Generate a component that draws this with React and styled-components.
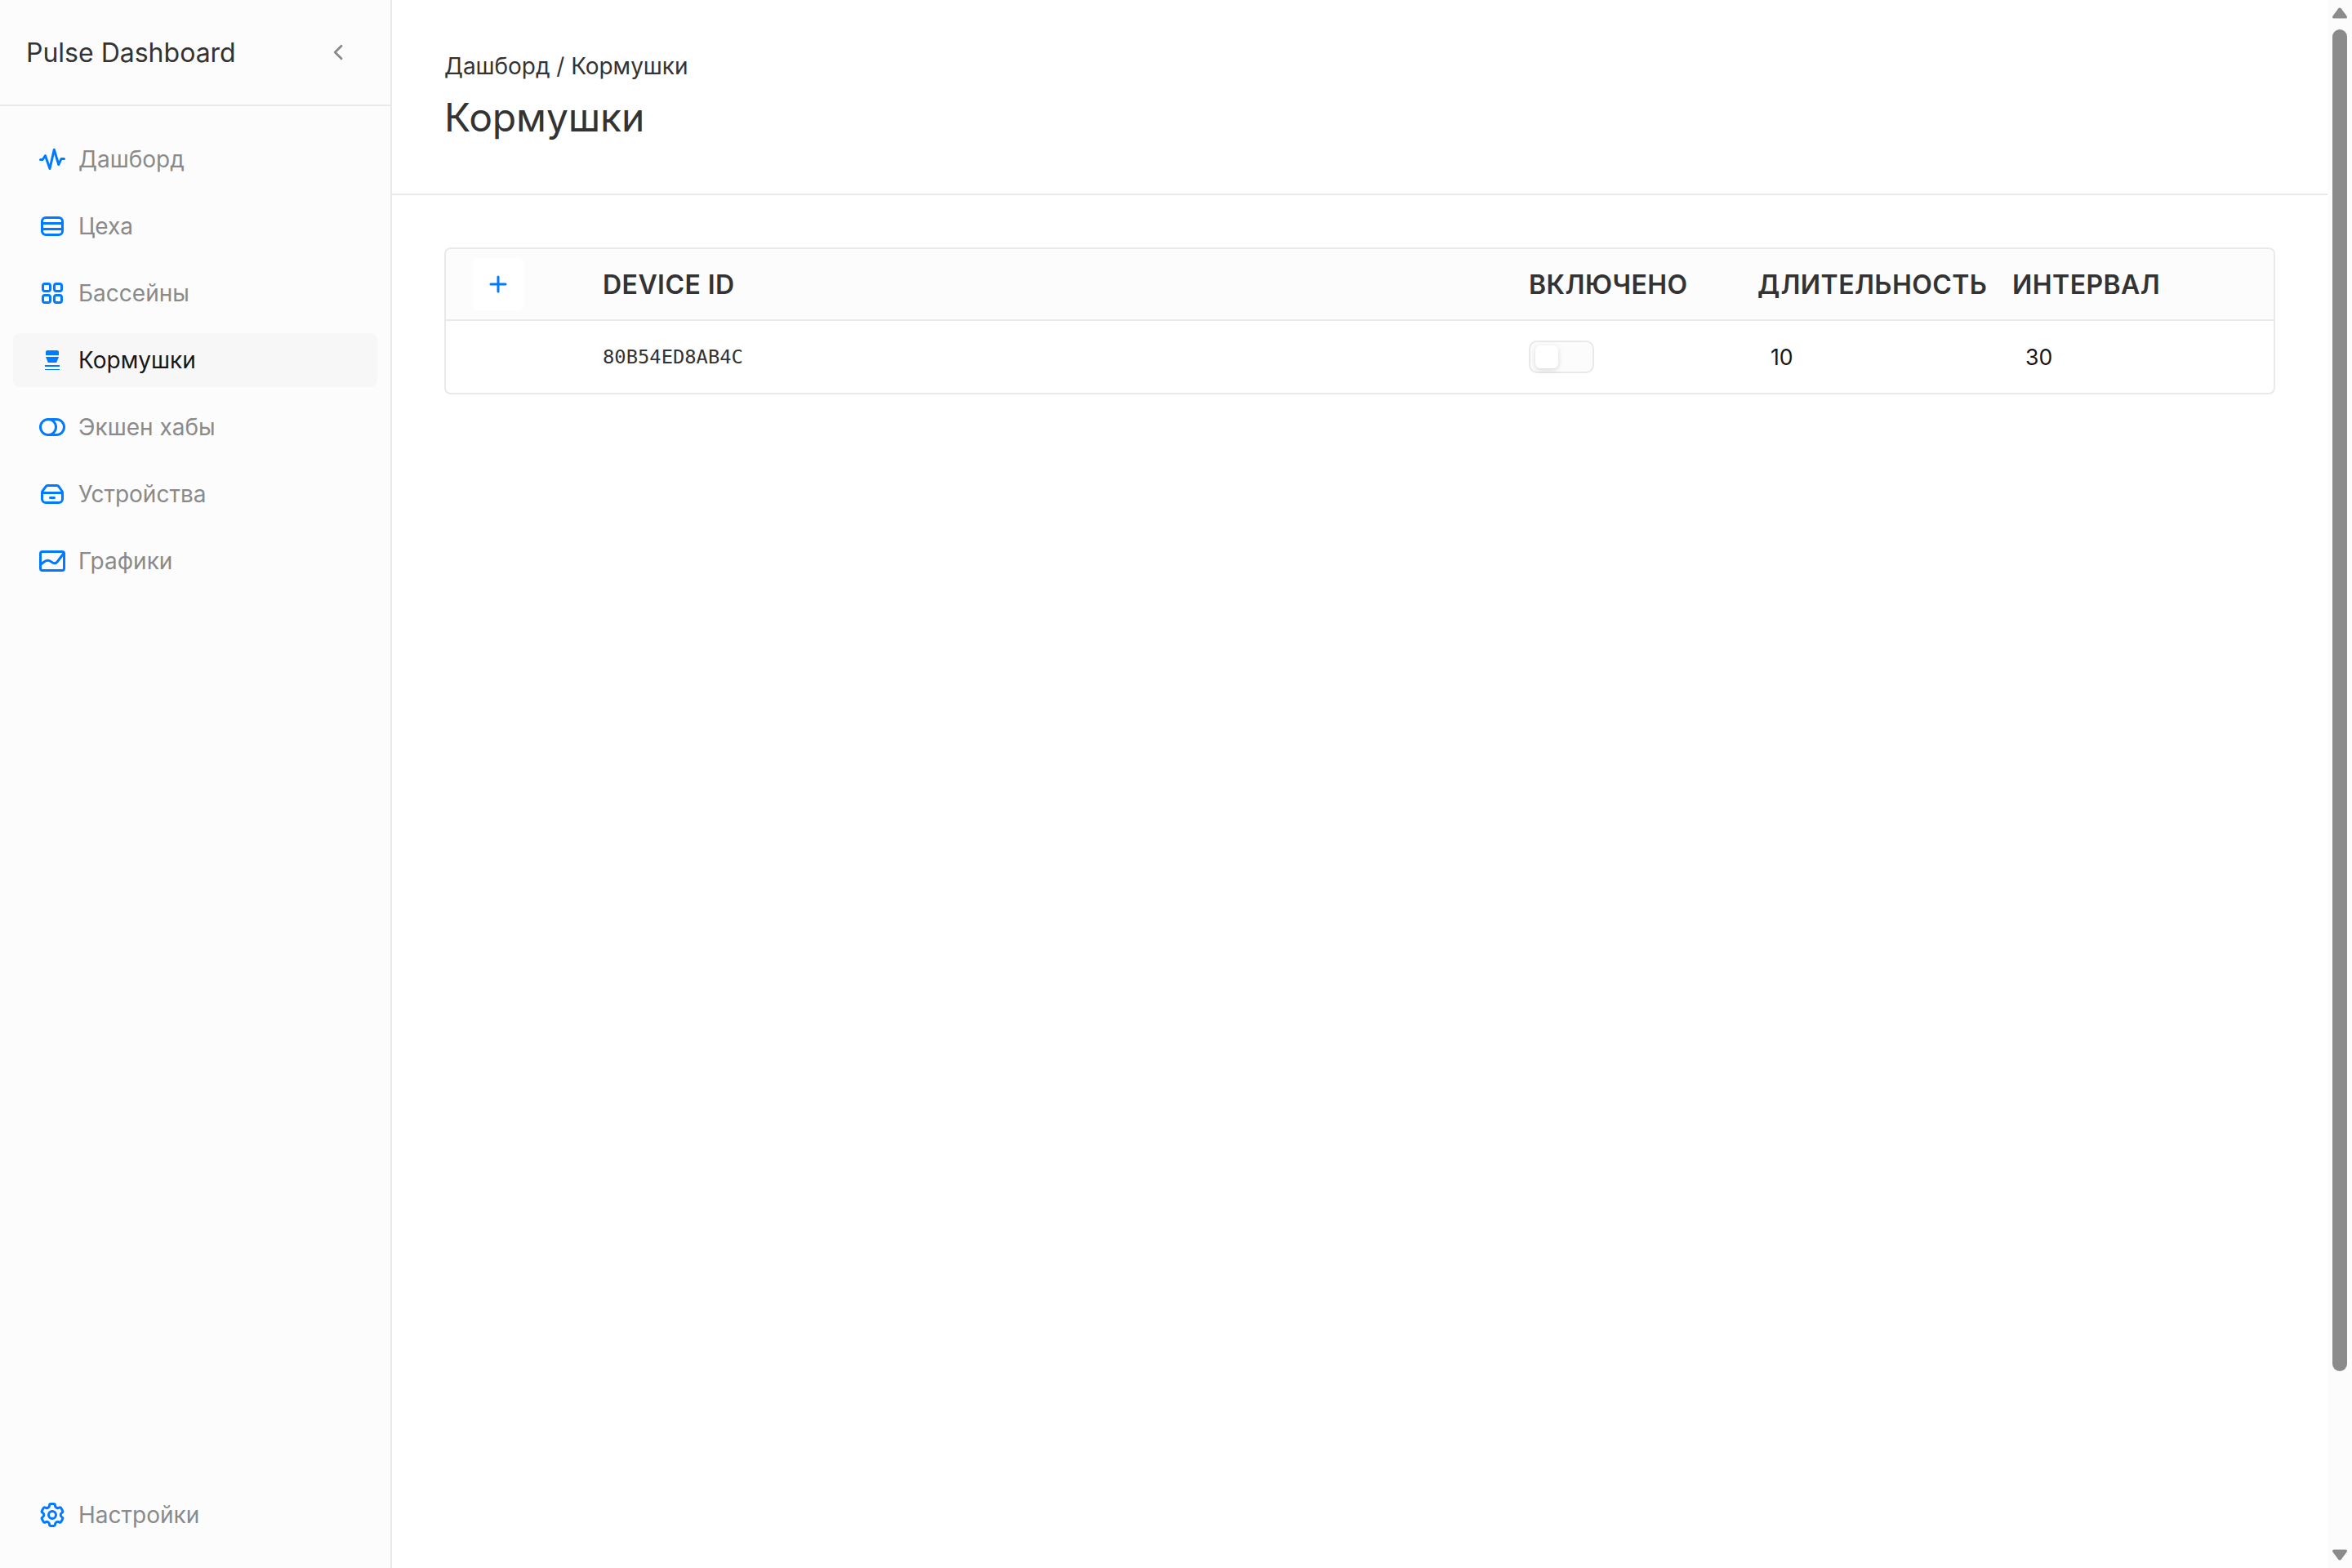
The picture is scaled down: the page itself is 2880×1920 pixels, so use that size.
import styled, { createGlobalStyle, css } from 'styled-components';
import { useState } from 'react';

const NAV_ITEMS = [
  { id: 'dashboard', label: 'Дашборд', Icon: PulseIcon },
  { id: 'workshops', label: 'Цеха', Icon: RowsIcon },
  { id: 'pools', label: 'Бассейны', Icon: GridIcon },
  { id: 'feeders', label: 'Кормушки', Icon: FeederIcon },
  { id: 'hubs', label: 'Экшен хабы', Icon: HubIcon },
  { id: 'devices', label: 'Устройства', Icon: DriveIcon },
  { id: 'charts', label: 'Графики', Icon: ChartIcon },
];

const FEEDERS = [
  { deviceId: '80B54ED8AB4C', enabled: false, duration: 10, interval: 30 },
];

export default function App() {
  const [active, setActive] = useState('feeders');
  const [feeders, setFeeders] = useState(FEEDERS);

  const toggle = (deviceId) =>
    setFeeders((prev) =>
      prev.map((f) =>
        f.deviceId === deviceId ? { ...f, enabled: !f.enabled } : f
      )
    );

  return (
    <>
      <GlobalStyle />
      <Layout>
        <Sidebar>
          <SidebarHeader>
            <Brand>Pulse Dashboard</Brand>
            <CollapseButton>
              <ChevronIcon />
            </CollapseButton>
          </SidebarHeader>
          <Nav>
            {NAV_ITEMS.map(({ id, label, Icon }) => (
              <NavItem
                key={id}
                $active={id === active}
                onClick={() => setActive(id)}
              >
                <Icon />
                {label}
              </NavItem>
            ))}
          </Nav>
          <NavFooter>
            <NavItem>
              <GearIcon />
              Настройки
            </NavItem>
          </NavFooter>
        </Sidebar>
        <Main>
          <PageHeader>
            <Breadcrumbs>Дашборд / Кормушки</Breadcrumbs>
            <Title>Кормушки</Title>
          </PageHeader>
          <Content>
            <Table>
              <HeadRow>
                <AddButton>
                  <PlusIcon />
                </AddButton>
                <HeadCell>DEVICE ID</HeadCell>
                <HeadCell>ВКЛЮЧЕНО</HeadCell>
                <HeadCell>ДЛИТЕЛЬНОСТЬ</HeadCell>
                <HeadCell>ИНТЕРВАЛ</HeadCell>
              </HeadRow>
              {feeders.map((f) => (
                <Row key={f.deviceId}>
                  <span />
                  <DeviceId>{f.deviceId}</DeviceId>
                  <Switch onClick={() => toggle(f.deviceId)}>
                    <Knob $on={f.enabled} />
                  </Switch>
                  <NumberCell>{f.duration}</NumberCell>
                  <NumberCell>{f.interval}</NumberCell>
                </Row>
              ))}
            </Table>
          </Content>
        </Main>
        <Scrollbar>
          <ArrowIcon />
          <Thumb />
          <ArrowIcon $down />
        </Scrollbar>
      </Layout>
    </>
  );
}

function PulseIcon() {
  return (
    <Glyph viewBox='0 0 32 32'>
      <path d='M1.5 16.5H4.2L7.5 11.7L13 27.5L18.3 4.2L23.8 22.5L27 15.5H30.5' />
    </Glyph>
  );
}

function RowsIcon() {
  return (
    <Glyph viewBox='0 0 32 32'>
      <rect x='3.5' y='5.5' width='25' height='21' rx='4.5' />
      <path d='M3.5 12.5H28.5M3.5 19.5H28.5' />
    </Glyph>
  );
}

function GridIcon() {
  return (
    <Glyph viewBox='0 0 32 32'>
      <rect x='4.5' y='4.5' width='9' height='9' rx='2.5' />
      <rect x='18.5' y='4.5' width='9' height='9' rx='2.5' />
      <rect x='4.5' y='18.5' width='9' height='9' rx='2.5' />
      <rect x='18.5' y='18.5' width='9' height='9' rx='2.5' />
    </Glyph>
  );
}

function FeederIcon() {
  return (
    <SolidGlyph viewBox='0 0 32 32'>
      <path d='M8 10V6a2 2 0 0 1 2-2H22a2 2 0 0 1 2 2V10Z' />
      <path d='M8 12H24L21.2 19H10.8Z' />
      <path d='M7 22H25V24H7ZM7 27H25V28H7Z' />
    </SolidGlyph>
  );
}

function HubIcon() {
  return (
    <Glyph viewBox='0 0 32 32'>
      <rect x='1.5' y='6.5' width='29' height='19' rx='9.5' />
      <path d='M11 6.5a9.5 9.5 0 0 1 0 19' />
    </Glyph>
  );
}

function DriveIcon() {
  return (
    <Glyph viewBox='0 0 32 32'>
      <path d='M3.5 14.5V22a4.5 4.5 0 0 0 4.5 4.5H24a4.5 4.5 0 0 0 4.5-4.5V14.5c0-1-.3-1.8-.8-2.5L24 6.9A3 3 0 0 0 21.6 5.5H10.4A3 3 0 0 0 8 6.9L4.3 12c-.5.7-.8 1.5-.8 2.5Z' />
      <path d='M4 14.5H28M13.5 20.5H18.5' />
    </Glyph>
  );
}

function ChartIcon() {
  return (
    <Glyph viewBox='0 0 32 32'>
      <rect x='1.5' y='4.5' width='29' height='23' rx='2.5' />
      <path d='M2 20L6 17C9 14.8 11.5 14.3 14.3 16.6C17.5 19.2 20 19.8 22.5 16.5L30 6.5' />
    </Glyph>
  );
}

function GearIcon() {
  return (
    <Glyph viewBox='0 0 16 16' $stroke={1.5}>
      <path d='M7.199 1.25H8.8c.524 0 .95.425.95.949 0 1.23 1.333 2 2.399 1.385a.949.949 0 0 1 1.296.348l.8 1.388a.949.949 0 0 1-.347 1.296c-1.066.615-1.066 2.153 0 2.768a.949.949 0 0 1 .347 1.296l-.8 1.388a.949.949 0 0 1-1.296.348c-1.066-.615-2.399.155-2.399 1.385a.949.949 0 0 1-.95.949H7.199a.949.949 0 0 1-.949-.949c0-1.23-1.333-2-2.399-1.385a.949.949 0 0 1-1.296-.348l-.8-1.388a.949.949 0 0 1 .347-1.296c1.066-.615 1.066-2.153 0-2.768a.949.949 0 0 1-.347-1.296l.8-1.388a.949.949 0 0 1 1.296-.348c1.066.615 2.399-.155 2.399-1.385 0-.524.425-.949.949-.949Z' />
      <circle cx='8' cy='8' r='2.25' />
    </Glyph>
  );
}

function PlusIcon() {
  return (
    <Glyph viewBox='0 0 32 32'>
      <path d='M16 7V25M7 16H25' />
    </Glyph>
  );
}

function ChevronIcon() {
  return (
    <Glyph viewBox='0 0 32 32' $stroke={2.8} $color='#8a8a8a'>
      <path d='M20 8.3L12.2 16L20 23.7' />
    </Glyph>
  );
}

function ArrowIcon({ $down }) {
  return (
    <Arrow viewBox='0 0 18 14' $down={$down}>
      <path d='M7.4 1.2a2 2 0 0 1 3.2 0L17.5 10.6c.9 1.3.4 3-1.4 3H1.9c-1.8 0-2.3-1.7-1.4-3Z' />
    </Arrow>
  );
}

const GlobalStyle = createGlobalStyle`
  * {
    box-sizing: border-box;
  }
  body {
    margin: 0;
    background: #ffffff;
    font-family: Inter, 'Liberation Sans', sans-serif;
    color: #333333;
    overflow: hidden;
  }
  button {
    border: none;
    background: none;
    padding: 0;
    font: inherit;
    cursor: pointer;
  }
`;

const Layout = styled.div`
  display: flex;
  width: 2880px;
  height: 1920px;
`;

const Sidebar = styled.aside`
  display: flex;
  flex-direction: column;
  width: 480px;
  background: #fcfcfc;
  border-right: 2px solid #e9e9e9;
`;

const SidebarHeader = styled.div`
  display: flex;
  align-items: center;
  justify-content: space-between;
  height: 130px;
  padding: 0 32px;
  border-bottom: 2px solid #e9e9e9;
`;

const Brand = styled.span`
  font-size: 32px;
`;

const CollapseButton = styled.button`
  display: flex;
  align-items: center;
  justify-content: center;
  width: 64px;
  height: 64px;
`;

const Nav = styled.nav`
  display: flex;
  flex-direction: column;
  gap: 16px;
  padding: 32px 16px;
`;

const NavFooter = styled.div`
  margin-top: auto;
  padding: 32px 16px;
`;

const NavItem = styled.a`
  display: flex;
  align-items: center;
  gap: 16px;
  height: 66px;
  padding: 0 32px;
  border-radius: 8px;
  font-size: 28px;
  color: #8a8a8a;
  cursor: pointer;
  ${({ $active }) =>
    $active &&
    css`
      background: #f7f7f7;
      color: #171717;
    `}
`;

const Main = styled.main`
  flex: 1;
  display: flex;
  flex-direction: column;
`;

const PageHeader = styled.header`
  height: 239px;
  padding: 64px 64px 0;
  border-bottom: 2px solid #e9e9e9;
`;

const Breadcrumbs = styled.div`
  font-size: 28px;
  line-height: 34px;
  letter-spacing: -0.05px;
`;

const Title = styled.h1`
  margin: 17px 0 0;
  font-size: 48px;
  font-weight: 400;
  line-height: 58px;
  letter-spacing: -0.15px;
`;

const Content = styled.div`
  padding: 64px;
`;

const Table = styled.div`
  border: 2px solid #e9e9e9;
  border-radius: 8px;
  overflow: hidden;
`;

const Row = styled.div`
  display: grid;
  grid-template-columns: 160px 1134px 280px 312px 1fr;
  align-items: center;
  height: 88px;
  padding: 0 32px;
`;

const HeadRow = styled(Row)`
  background: #fcfcfc;
  border-bottom: 2px solid #e9e9e9;
`;

const HeadCell = styled.span`
  font-size: 32px;
  font-weight: 600;
  letter-spacing: 0.45px;
`;

const AddButton = styled.button`
  display: flex;
  align-items: center;
  justify-content: center;
  width: 64px;
  height: 64px;
  border-radius: 8px;
  background: #ffffff;
`;

const DeviceId = styled.span`
  font-family: 'DejaVu Sans Mono', monospace;
  font-size: 23.8px;
`;

const NumberCell = styled.span`
  padding-left: 16px;
  font-size: 26.67px;
  color: #171717;
`;

const Switch = styled.button`
  display: flex;
  align-items: center;
  width: 80px;
  height: 40px;
  padding: 0 6px;
  border: 2px solid #e9e9e9;
  border-radius: 10px;
  background: #fcfcfc;
`;

const Knob = styled.span`
  width: 28px;
  height: 28px;
  border-radius: 6px;
  background: #ffffff;
  box-shadow: 0 2px 6px rgba(0, 0, 0, 0.15);
  ${({ $on }) =>
    $on &&
    css`
      margin-left: auto;
    `}
`;

const Glyph = styled.svg`
  flex: none;
  width: 32px;
  height: 32px;
  fill: none;
  stroke: ${({ $color = '#007bff' }) => $color};
  stroke-width: ${({ $stroke = 3 }) => $stroke};
  stroke-linecap: round;
  stroke-linejoin: round;
`;

const SolidGlyph = styled(Glyph)`
  fill: #007bff;
  stroke: none;
`;

const Scrollbar = styled.div`
  display: flex;
  flex-direction: column;
  align-items: center;
  width: 30px;
  padding: 9px 0;
  background: #fcfcfc;
`;

const Thumb = styled.div`
  width: 18px;
  height: 1643px;
  margin: 13px 0 auto;
  border-radius: 9px;
  background: #8b8b8b;
`;

const Arrow = styled.svg`
  flex: none;
  width: 18px;
  height: 14px;
  fill: #8b8b8b;
  ${({ $down }) =>
    $down &&
    css`
      transform: rotate(180deg);
    `}
`;
